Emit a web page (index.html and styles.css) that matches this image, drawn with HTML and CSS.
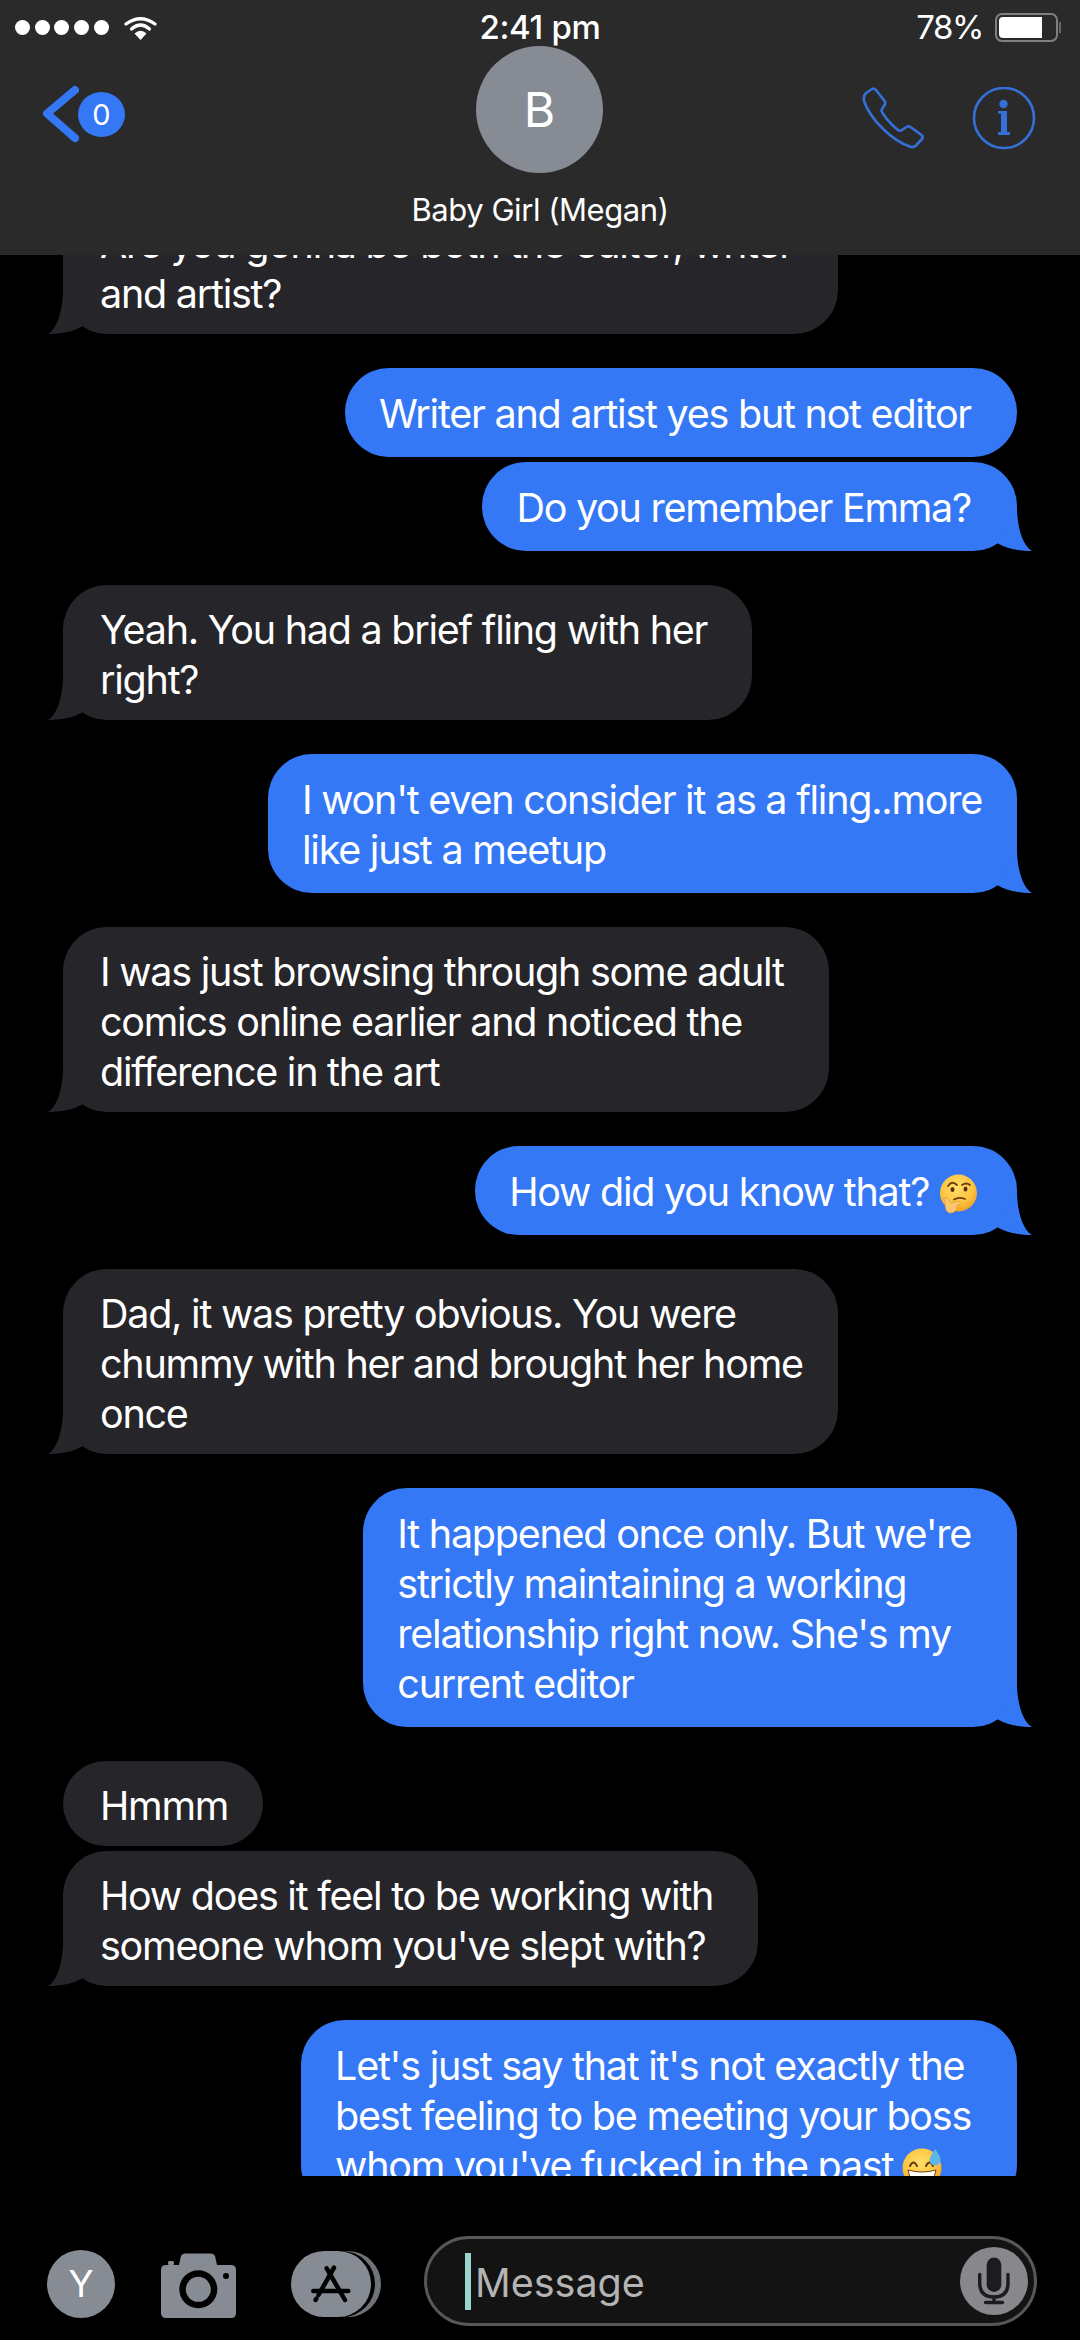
FILE: index.html
```html
<!DOCTYPE html>
<html lang="en">
<head>
    <meta charset="UTF-8">
    <meta name="viewport" content="width=device-width, initial-scale=1.0">
    <title>Baby Girl (Megan)</title>
    <link rel="stylesheet" href="styles.css">
</head>
<body>
    <svg class="defs" width="0" height="0">
        <defs>
            <radialGradient id="face" cx="45%" cy="35%" r="70%">
                <stop offset="0%" stop-color="#ffdf6b"/>
                <stop offset="60%" stop-color="#fcc53f"/>
                <stop offset="100%" stop-color="#f09a25"/>
            </radialGradient>
        </defs>
    </svg>

    <header class="top">
        <div class="status">
            <div class="status-left">
                <span class="dots"><i></i><i></i><i></i><i></i><i></i></span>
                <svg class="wifi" width="33" height="25" viewBox="0 0 33 25">
                    <path d="M2 9 Q16.500 -1.500 31 9" fill="none" stroke="#fff" stroke-width="3.200" stroke-linecap="round"/>
                    <path d="M7.500 14 Q16.500 6 25.500 14" fill="none" stroke="#fff" stroke-width="3.200" stroke-linecap="round"/>
                    <path d="M10.500 18.500 Q16.500 13 22.500 18.500 L16.500 25 Z" fill="#fff"/>
                </svg>
            </div>
            <div class="clock">2:41 pm</div>
            <div class="status-right">
                <span class="percent">78%</span>
                <span class="battery"><span class="battery-level"></span></span>
            </div>
        </div>

        <div class="nav">
            <div class="back">
                <svg width="36" height="58" viewBox="0 0 36 58">
                    <path d="M32 5 L4 28.500 L32 53" fill="none" stroke="#3478f6" stroke-width="8" stroke-linecap="round" stroke-linejoin="round"/>
                </svg>
                <span class="badge">0</span>
            </div>
            <div class="avatar">B</div>
            <div class="actions">
                <svg width="63" height="63" viewBox="0 0 63 63">
                    <path d="M4 6 L10 2 Q12 1 14 3 L22.500 14 Q24 16 22.500 18 L20 22 Q19 24 20.500 26 Q27 36 36 43 Q38 44.500 40 43 L44.500 40 Q46.500 38.500 48.500 40 L59.500 48 Q61.500 50 60 52 L54 58.500 Q52 60.500 49 60 C30 54 8 32 2 14 Q1 9 4 6 Z" fill="none" stroke="#3470d8" stroke-width="2.600" stroke-linejoin="round"/>
                </svg>
                <svg width="64" height="64" viewBox="0 0 64 64">
                    <circle cx="32" cy="31" r="30" fill="none" stroke="#3470d8" stroke-width="2.600"/>
                    <circle cx="31.500" cy="17" r="4.200" fill="#3470d8"/>
                    <path d="M26 24 H35 V45 H38 V48 H26 V45 H29 V26.500 H26 Z" fill="#3470d8"/>
                </svg>
            </div>
        </div>
        <div class="name">Baby Girl (Megan)</div>
    </header>

    <main class="thread">
        <div class="bubble in tail first">Are you gonna be both the editor, writer<br>and artist?</div>
        <div class="bubble out">Writer and artist yes but not editor</div>
        <div class="bubble out tail next">Do you remember Emma?</div>
        <div class="bubble in tail">Yeah. You had a brief fling with her<br>right?</div>
        <div class="bubble out tail snug">I won't even consider it as a fling..more<br>like just a meetup</div>
        <div class="bubble in tail">I was just browsing through some adult<br>comics online earlier and noticed the<br>difference in the art</div>
        <div class="bubble out tail snug">How did you know that?
            <svg class="emoji" width="40" height="40" viewBox="0 0 40 40">
                <circle cx="20.500" cy="19" r="18.500" fill="url(#face)"/>
                <path d="M10 12 Q14 6 19 11" fill="none" stroke="#6b3f12" stroke-width="1.800" stroke-linecap="round"/>
                <path d="M24 11 Q28 8 32 11" fill="none" stroke="#6b3f12" stroke-width="1.800" stroke-linecap="round"/>
                <ellipse cx="14.500" cy="15.500" rx="2" ry="2.600" fill="#5a3410"/>
                <ellipse cx="27.500" cy="15" rx="2" ry="2.600" fill="#5a3410"/>
                <path d="M16 25.500 Q21 22.500 27 25" fill="none" stroke="#6b3f12" stroke-width="1.800" stroke-linecap="round"/>
                <path d="M6 24 Q9 22 11 26 L13 29 L21 27 Q24 28 22 30 L19 32 Q19 38 13 39 Q8 39 7.500 33 Z" fill="#fbc66c" stroke="#e59a38" stroke-width="0.700"/>
            </svg>
        </div>
        <div class="bubble in tail snug">Dad, it was pretty obvious. You were<br>chummy with her and brought her home<br>once</div>
        <div class="bubble out tail">It happened once only. But we're<br>strictly maintaining a working<br>relationship right now. She's my<br>current editor</div>
        <div class="bubble in snug">Hmmm</div>
        <div class="bubble in tail next">How does it feel to be working with<br>someone whom you've slept with?</div>
        <div class="bubble out">Let's just say that it's not exactly the<br>best feeling to be meeting your boss<br>whom you've fucked in the past
            <svg class="emoji" width="40" height="40" viewBox="0 0 40 40">
                <circle cx="20" cy="20" r="19.500" fill="url(#face)"/>
                <path d="M8 18 Q11.500 11 15 18" fill="none" stroke="#6b3f12" stroke-width="2" stroke-linecap="round"/>
                <path d="M24 18 Q27.500 11 31 18" fill="none" stroke="#6b3f12" stroke-width="2" stroke-linecap="round"/>
                <path d="M6 22 Q20 26 34 22 Q32 36 20 36 Q8 36 6 22 Z" fill="#fff" stroke="#6b3f12" stroke-width="1"/>
                <path d="M33 1 Q39 9 38.500 12 A5.500 5.500 0 0 1 27.500 12 Q28 8 33 1 Z" fill="#5fb7e8"/>
            </svg>
        </div>
    </main>

    <footer class="composer">
        <div class="round-btn">Y</div>
        <svg class="camera" width="75" height="65" viewBox="0 0 75 65">
            <rect x="7" y="8" width="6" height="4" rx="1.500" fill="#878c94"/>
            <path d="M5 12 H18 L20 3 Q21 0.500 24 0.500 H50 Q53 0.500 54 3 L56 12 H70 Q75 12 75 17 V60 Q75 65 70 65 H5 Q0 65 0 60 V17 Q0 12 5 12 Z" fill="#878c94"/>
            <circle cx="37.300" cy="36.300" r="19" fill="#000"/>
            <circle cx="37.300" cy="36.300" r="12.500" fill="#878c94"/>
            <circle cx="65" cy="23" r="3" fill="#000"/>
        </svg>
        <svg class="apps" width="90" height="66" viewBox="0 0 90 66">
            <rect x="24" y="0" width="66" height="66" rx="33" fill="#6f7278"/>
            <rect x="19" y="0" width="65" height="66" rx="33" fill="#000"/>
            <rect x="0" y="0" width="80" height="66" rx="33" fill="#878c94"/>
            <g fill="none" stroke="#000" stroke-width="4.500" stroke-linecap="round">
                <path d="M35.700 17.300 L54 49"/>
                <path d="M43 16.700 L27.500 44"/>
                <path d="M25.500 47.500 L24.500 49"/>
                <path d="M22.300 40 H57.300"/>
            </g>
        </svg>
        <div class="input">
            <span class="caret"></span>
            <span class="placeholder">Message</span>
            <span class="mic">
                <svg width="68" height="68" viewBox="0 0 68 68">
                    <rect x="26.700" y="10.500" width="14.600" height="34.500" rx="7.300" fill="#1c1c1e"/>
                    <path d="M19.700 27.500 V36 Q19.700 50 34 50 Q48 50 48 36 V27.500 M34 50 V55 M25.500 55.500 H42.500" fill="none" stroke="#1c1c1e" stroke-width="3.400" stroke-linecap="round"/>
                </svg>
            </span>
        </div>
    </footer>
</body>
</html>
```

FILE: styles.css
```css
* {
    box-sizing: border-box;
}

body {
    margin: 0;
    height: 2340px;
    overflow: hidden;
    display: flex;
    flex-direction: column;
    background: #000;
    color: #fff;
    font-family: 'Inter', 'Liberation Sans', sans-serif;
}

.defs {
    position: absolute;
}

/* Top bar */
.top {
    flex: none;
    height: 255px;
    background: #2a2a2b;
}

.status {
    display: grid;
    grid-template-columns: 1fr auto 1fr;
    align-items: center;
    height: 46px;
    padding: 7px 22px 0;
    font-size: 33px;
    letter-spacing: -0.3px;
}

.status-left {
    display: flex;
    align-items: center;
    gap: 15px;
    margin-left: -7px;
}

.dots {
    display: flex;
    gap: 4.700px;
}

.dots i {
    width: 15px;
    height: 15px;
    border-radius: 50%;
    background: #fff;
}

.clock {
    font-weight: 500;
}

.status-right {
    display: flex;
    align-items: center;
    justify-content: flex-end;
    gap: 12px;
}

.percent {
    letter-spacing: -1.4px;
}

.battery {
    position: relative;
    display: block;
    width: 63px;
    height: 29px;
    padding: 2px;
    border: 2px solid #808080;
    border-radius: 7px;
}

.battery::after {
    content: "";
    position: absolute;
    right: -5px;
    top: 7px;
    width: 2px;
    height: 11px;
    background: #666;
}

.battery-level {
    display: block;
    width: 43px;
    height: 100%;
    background: #fff;
    border-radius: 4px 0 0 4px;
}

.nav {
    display: grid;
    grid-template-columns: 1fr 127px 1fr;
    padding: 0 44px 0 43px;
}

.back {
    display: flex;
    align-items: center;
    margin-top: 39px;
    height: 58px;
}

.badge {
    width: 47px;
    height: 45px;
    margin-left: -1px;
    border-radius: 50%;
    background: #3478f6;
    font-size: 29px;
    line-height: 45px;
    text-align: center;
}

.avatar {
    height: 127px;
    border-radius: 50%;
    background: #878c94;
    font-size: 48px;
    line-height: 127px;
    text-align: center;
}

.actions {
    display: flex;
    justify-content: flex-end;
    gap: 47px;
    margin-top: 41px;
}

.name {
    margin-top: 18px;
    font-size: 31px;
    line-height: 38px;
    letter-spacing: -0.45px;
    text-align: center;
}

/* Messages */
.thread {
    flex: none;
    height: 1921px;
    overflow: hidden;
    display: flex;
    flex-direction: column;
    padding: 0 63px;
}

.bubble {
    position: relative;
    flex: none;
    margin-top: 34px;
    font-size: 39.500px;
    line-height: 50px;
    letter-spacing: -1.25px;
    border-radius: 44px;
    white-space: nowrap;
}

.bubble.first {
    margin-top: -56px;
}

.bubble.next {
    margin-top: 5px;
}

.in {
    align-self: flex-start;
    padding: 20px 45px 15px 37px;
    background: #26252a;
}

.out {
    align-self: flex-end;
    padding: 20.500px 46px 18.500px 34px;
    background: #3478f6;
}

.bubble.snug {
    padding-right: 35px;
}

/* Bubble tail, drawn for the bottom right corner and flipped for incoming */
.tail::after {
    content: "";
    position: absolute;
    right: -15px;
    bottom: 0;
    width: 36px;
    height: 44px;
    background: inherit;
    clip-path: path("M21 0 C21 18 26 38 36 44 C24 44 11 42 1 36 Z");
}

.in.tail::after {
    right: auto;
    left: -15px;
    transform: scaleX(-1);
}

.emoji {
    vertical-align: -8px;
    margin: 0 4px 0 -1px;
}

/* Bottom bar */
.composer {
    flex: none;
    height: 164px;
    display: flex;
    align-items: flex-end;
    padding: 0 0 14px 47px;
}

.round-btn {
    width: 68px;
    height: 68px;
    margin-bottom: 8px;
    border-radius: 50%;
    background: #878c94;
    font-size: 37px;
    line-height: 68px;
    text-align: center;
}

.camera {
    margin: 0 0 8px 46px;
}

.apps {
    margin: 0 0 9px 55px;
}

.input {
    display: flex;
    align-items: center;
    width: 613px;
    height: 90px;
    margin-left: 43px;
    padding: 0 6px 0 38px;
    background: #131313;
    border: 3.500px solid #58585a;
    border-radius: 45px;
}

.caret {
    flex: none;
    width: 6px;
    height: 57px;
    background: #9ad4cf;
}

.placeholder {
    flex: 1;
    margin: 3px 0 0 4px;
    font-size: 39.500px;
    color: #b4b4b4;
}

.mic {
    display: block;
    width: 68px;
    height: 68px;
    border-radius: 50%;
    background: #87878c;
}

.mic svg {
    display: block;
}
```
